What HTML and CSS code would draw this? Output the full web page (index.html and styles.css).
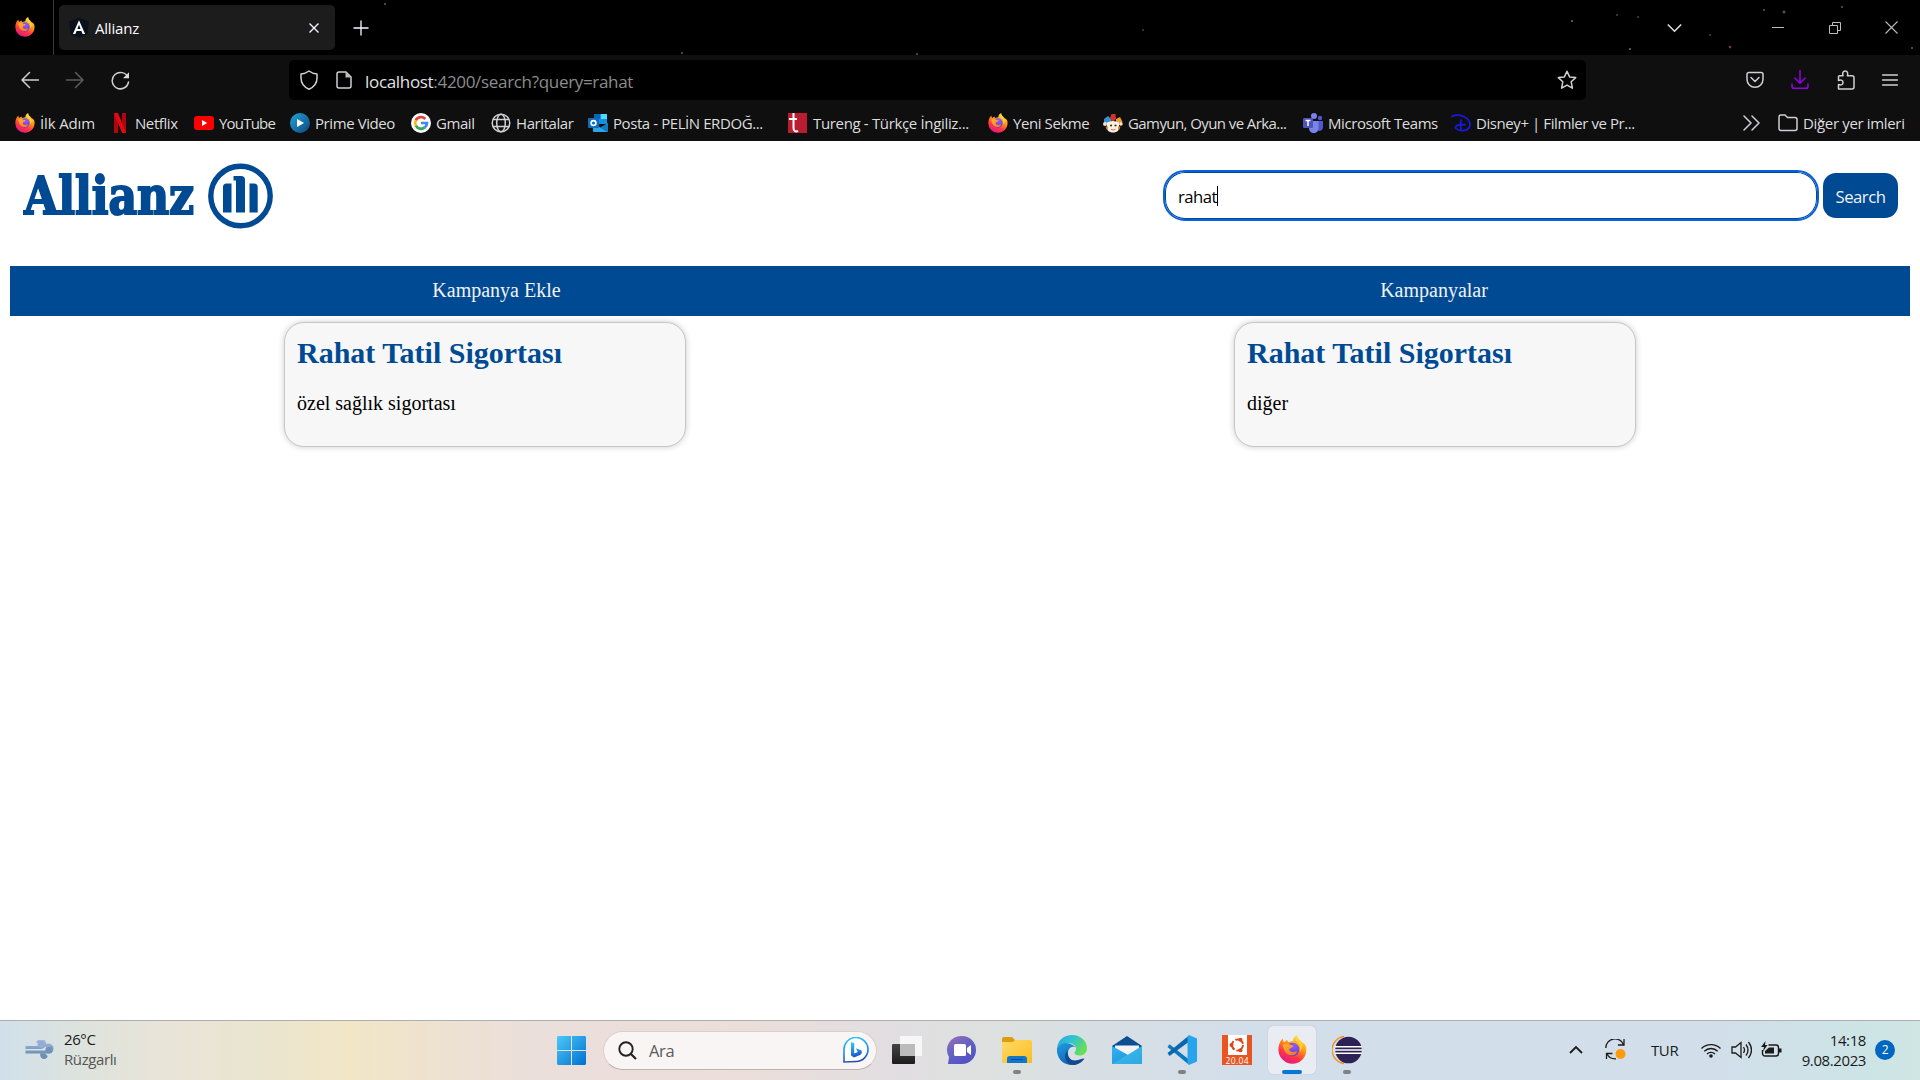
FILE: index.html
```html
<!DOCTYPE html>
<html lang="tr">
<head>
<meta charset="utf-8">
<title>Allianz</title>
<link rel="stylesheet" href="styles.css">
</head>
<body>
<svg class="defs" aria-hidden="true">
  <defs>
    <linearGradient id="ffFlame" x1=".8" y1="0" x2=".3" y2="1"><stop offset="0" stop-color="#fff44f"/><stop offset=".4" stop-color="#ff980e"/><stop offset=".7" stop-color="#ff3647"/><stop offset="1" stop-color="#e31587"/></linearGradient>
    <radialGradient id="ffGlobe" cx=".6" cy=".2" r=".9"><stop offset="0" stop-color="#9059ff"/><stop offset="1" stop-color="#5b3fc4"/></radialGradient>
    <linearGradient id="ffInner" x1="0" y1="0" x2="1" y2="1"><stop offset="0" stop-color="#ffb82e"/><stop offset="1" stop-color="#ff6a2a"/></linearGradient>
    <linearGradient id="winBlue" x1="0" y1="0" x2="1" y2="1"><stop offset="0" stop-color="#4cc8f8"/><stop offset="1" stop-color="#0070d0"/></linearGradient>
    <linearGradient id="bing" x1=".3" y1="0" x2=".5" y2="1"><stop offset="0" stop-color="#2bc9f0"/><stop offset=".6" stop-color="#1f86e8"/><stop offset="1" stop-color="#2247b8"/></linearGradient>
    <linearGradient id="chat" x1="0" y1="0" x2=".6" y2="1"><stop offset="0" stop-color="#a06fb4"/><stop offset=".5" stop-color="#6463c4"/><stop offset="1" stop-color="#5152c6"/></linearGradient>
    <linearGradient id="folder" x1="0" y1="0" x2="1" y2="1"><stop offset="0" stop-color="#ffdb6b"/><stop offset="1" stop-color="#fcbc1f"/></linearGradient>
    <linearGradient id="edgeTop" x1="0" y1="0" x2="1" y2=".5"><stop offset="0" stop-color="#2aa5dc"/><stop offset=".5" stop-color="#32c3d2"/><stop offset="1" stop-color="#67df55"/></linearGradient>
    <linearGradient id="edgeLeft" x1="0" y1="0" x2=".6" y2="1"><stop offset="0" stop-color="#1f9de0"/><stop offset="1" stop-color="#1360b4"/></linearGradient>
    <linearGradient id="mail" x1="0" y1="0" x2="1" y2="1"><stop offset="0" stop-color="#35b6f0"/><stop offset="1" stop-color="#1687d8"/></linearGradient>
    <linearGradient id="wind" x1="0" y1="0" x2="0" y2="1"><stop offset="0" stop-color="#a6b9dc"/><stop offset="1" stop-color="#5f87ad"/></linearGradient>
    <linearGradient id="prime" x1="0" y1="0" x2="1" y2="1"><stop offset="0" stop-color="#1da6da"/><stop offset="1" stop-color="#12457c"/></linearGradient>
    <linearGradient id="dark" x1="0" y1="0" x2="0" y2="1"><stop offset="0" stop-color="#444"/><stop offset="1" stop-color="#1c1c1c"/></linearGradient>
    <symbol id="firefox" viewBox="0 0 20 20">
      <path d="M19.4 8.2c-.4-1.3-1.3-2.4-2.3-3 .2.5.3.9.3 1.2C16.300 3.800 13.300 3 13.200 0c-2 1-2.900 2.600-2.800 4.200-1 0-2 .3-2.900.8-.5-.4-1-.9-1.200-1.600-.9.400-1.500 1-1.900 1.600C3.600 4.700 3.300 3.600 3.400 2.400 1.700 3.500.4 6.600.3 9.900A9.700 9.700 0 0 0 10 19.800c5.800 0 10.500-5 9.400-11.600z" fill="url(#ffFlame)"/>
      <circle cx="10" cy="10" r="4.700" fill="url(#ffGlobe)"/>
      <path d="M3.200 6.800c1.800-1 3.600-1 5.200-.1 1 .2 2 .4 2.200 1-.2.800-1.700 1.100-2.600 1.700-.4.900.1 2 1.600 2.400 1.400.4 2.400-.7 3.600-.3-.8 2.200-3.200 3-5.400 2.300C4.600 12.700 3.900 9.600 3.200 6.800z" fill="url(#ffInner)"/>
      <path d="M12 3.700c2.800 1.600 3.900 4.300 3 7.300 1.400-.5 2-2.500 1.700-4.600C15 4.400 13.500 3.500 13.300 1.500c-.8.6-1.300 1.400-1.300 2.200z" fill="#ffd940" opacity=".75"/>
    </symbol>
  </defs>
</svg>

<header class="chrome">
  <div class="tabstrip">
    <div class="pinned"><svg class="i20"><use href="#firefox"/></svg></div>
    <div class="tab">
      <svg class="i20" viewBox="0 0 20 20"><path d="M10 0l10 3.500-1.500 12.300L10 20l-8.500-4.200L0 3.500z" fill="#0a101c"/><path d="M10 2.300L3.900 16h2.500l1.200-3h4.800l1.200 3h2.500zm0 4.400l1.600 4.200H8.400z" fill="#fff"/></svg>
      <span class="tab-title">Allianz</span>
      <svg class="tab-close" viewBox="0 0 10 10"><path d="M.5.5l9 9M9.500.5l-9 9" stroke="#fbfbfe" stroke-width="1.300"/></svg>
    </div>
    <svg class="new-tab" viewBox="0 0 16 16"><path d="M8 .5v15M.5 8h15" stroke="#fbfbfe" stroke-width="1.300"/></svg>
    <div class="window-controls">
      <svg width="15" height="10" viewBox="0 0 15 10"><path d="M.8 1.500l6.700 6.700 6.700-6.700" fill="none" stroke="#ddd" stroke-width="1.600"/></svg>
      <svg width="12" height="12" viewBox="0 0 12 12"><path d="M0 5.500h12" stroke="#bbb"/></svg>
      <svg width="12" height="12" viewBox="0 0 12 12"><path d="M.5 3.500h8v8h-8zM3.500 3.500v-3h8v8h-3" fill="none" stroke="#bbb"/></svg>
      <svg width="13" height="13" viewBox="0 0 13 13"><path d="M.5.5l12 12M12.500.5l-12 12" stroke="#bbb" stroke-width="1.100"/></svg>
    </div>
  </div>

  <div class="toolbar">
    <div class="nav-buttons">
      <svg width="18" height="18" viewBox="0 0 18 18" class="line"><path d="M17.500 9H1M8.500 1.500L1 9l7.500 7.500"/></svg>
      <svg width="18" height="18" viewBox="0 0 18 18" class="line faded"><path d="M.5 9H17M9.500 1.500L17 9l-7.500 7.500"/></svg>
      <svg width="19" height="19" viewBox="0 0 19 19" class="line"><path d="M17 6.500A8.200 8.200 0 1 0 17.500 11"/><path d="M18 1.200v6h-6z" fill="#ddd" stroke="none"/></svg>
    </div>
    <div class="urlbar">
      <svg width="18" height="20" viewBox="0 0 18 20" class="line"><path d="M9 1c2.500 2 5 2.800 8 3v4c0 5.500-3 9-8 11.200C4 17 1 13.500 1 8V4c3-.2 5.500-1 8-3z"/></svg>
      <svg class="page-icon line" width="16" height="18" viewBox="0 0 16 18"><path d="M3 1h7l5 5v9a2 2 0 0 1-2 2H3a2 2 0 0 1-2-2V3a2 2 0 0 1 2-2z"/><path d="M9.500 1v5.500H15z" fill="#bbb" stroke="none"/></svg>
      <span class="url"><b>localhost</b>:4200/search?query=rahat</span>
      <svg class="star line" width="20" height="20" viewBox="0 0 20 20"><path d="M10 1.300l2.600 5.600 6.100.7-4.500 4.200 1.200 6.400-5.400-3.100-5.400 3.100 1.200-6.400L1.300 7.600l6.100-.7z"/></svg>
    </div>
    <div class="actions">
      <svg width="18" height="18" viewBox="0 0 18 18" class="line"><path d="M2.800 1.500h12.400A1.800 1.800 0 0 1 17 3.300v5a8 8 0 0 1-16 0v-5a1.800 1.800 0 0 1 1.800-1.800zM5 6.500l4 4 4-4"/></svg>
      <svg width="18" height="20" viewBox="0 0 18 20" class="line download"><path d="M9 0v13M3.800 8L9 13.200 14.200 8M1 14v2.500A1.800 1.800 0 0 0 2.800 18.300h12.400a1.800 1.800 0 0 0 1.800-1.800V14"/></svg>
      <svg width="18" height="20" viewBox="0 0 18 20" class="line"><path d="M1.500 19V14.500c3 1 4.500 0 4.500-2s-1.500-3-4.500-2V6.700a1 1 0 0 1 1-1H6c-.8-2.600 0-4.700 2.200-4.700s3 2.100 2.200 4.700H15a2 2 0 0 1 2 2V17a2 2 0 0 1-2 2z"/></svg>
      <svg width="16" height="14" viewBox="0 0 16 14" class="line"><path d="M.5 2h15M.5 7h15M.5 12h15"/></svg>
    </div>
  </div>

  <div class="bookmarks">
    <div class="bookmark first"><svg class="i20"><use href="#firefox"/></svg><span>İlk Adım</span></div>
    <div class="bookmark"><svg class="i20" viewBox="0 0 20 20"><path d="M4 0h4v20H4zM12 0h4v20h-4z" fill="#b1060f"/><path d="M4 0h4l8 20h-4z" fill="#e50914"/></svg><span>Netflix</span></div>
    <div class="bookmark youtube"><svg class="i20" viewBox="0 0 20 20"><rect y="3" width="20" height="14" rx="3" fill="#f00"/><path d="M8 7l5.200 3L8 13z" fill="#fff"/></svg><span>YouTube</span></div>
    <div class="bookmark"><svg class="i20" viewBox="0 0 20 20"><circle cx="10" cy="10" r="10" fill="url(#prime)"/><path d="M7 6l7 4-7 4z" fill="#fff"/></svg><span>Prime Video</span></div>
    <div class="bookmark"><svg class="i20" viewBox="0 0 20 20"><circle cx="10" cy="10" r="10" fill="#fff"/><g fill="none" stroke-width="2.700"><path d="M14.300 6A5.900 5.900 0 0 0 4.800 7.300" stroke="#ea4335"/><path d="M4.800 7.300a5.900 5.900 0 0 0 0 5.400" stroke="#fbbc05"/><path d="M4.800 12.700a5.900 5.900 0 0 0 9 1.700" stroke="#34a853"/><path d="M13.800 14.400A5.900 5.900 0 0 0 16 10h-6" stroke="#4285f4"/></g></svg><span>Gmail</span></div>
    <div class="bookmark"><svg class="i20 line" viewBox="0 0 20 20"><circle cx="10" cy="10" r="8.800"/><ellipse cx="10" cy="10" rx="4.300" ry="8.800"/><path d="M2.500 6.500h15M2.500 13.500h15"/></svg><span>Haritalar</span></div>
    <div class="bookmark"><svg class="i20" viewBox="0 0 20 20"><path d="M6 1h13v10H6z" fill="#1490df"/><path d="M12.500 1H19v5h-6.500z" fill="#50d9ff"/><path d="M6 1h6.500v5H6z" fill="#0364b8"/><path d="M5 10l8 5 7-5v8a1 1 0 0 1-1 1H6a1 1 0 0 1-1-1z" fill="#28a8ea"/><path d="M20 10v8a1 1 0 0 1-1 1l-7-4.500z" fill="#1279c5"/><rect y="5" width="11" height="10" rx="1" fill="#0f6cbd"/><circle cx="5.500" cy="10" r="2.400" fill="none" stroke="#fff" stroke-width="1.600"/></svg><span>Posta - PELİN ERDOĞ...</span></div>
    <div class="bookmark tureng"><svg class="i20" viewBox="0 0 20 20"><rect width="19" height="20" fill="#ba1c30"/><path d="M5.500 0v15c0 3 2 4 4.500 3M1 6h8" fill="none" stroke="#fff" stroke-width="2"/></svg><span>Tureng - Türkçe İngiliz...</span></div>
    <div class="bookmark"><svg class="i20"><use href="#firefox"/></svg><span>Yeni Sekme</span></div>
    <div class="bookmark gamyun"><svg class="i20" viewBox="0 0 20 20"><path d="M1 10.500V6l4-3 4 4-2 3.500z" fill="#3c8fd0"/><path d="M8.500 1h4l.5 5-3 3-3-4z" fill="#d6302f"/><path d="M13 6l4-2 2.500 5-1.500 3h-5z" fill="#e8a13b"/><circle cx="2" cy="11" r="2" fill="#f2e6d2"/><circle cx="18" cy="11" r="1.700" fill="#f2e6d2"/><path d="M4 9.500q6-3 12 0V15c0 3-3 4.500-6 4.500S4 18 4 15z" fill="#fff2df"/><path d="M2.500 13.500h2.500v3H3.500zM15 13.500h2.500l-1 3H15z" fill="#d58a49"/><circle cx="8" cy="12.500" r="1.100" fill="#432"/><circle cx="12.500" cy="12.500" r="1.100" fill="#432"/><path d="M8 16.300q2.300 1.500 4.500 0" stroke="#c66" fill="none"/></svg><span>Gamyun, Oyun ve Arka...</span></div>
    <div class="bookmark"><svg class="i20" viewBox="0 0 20 20"><circle cx="17" cy="5" r="2.200" fill="#5059c9"/><circle cx="11" cy="3" r="3" fill="#7b83eb"/><path d="M14 8h6v6c0 2.500-2 4-4 4s-2-3-2-3z" fill="#5059c9"/><path d="M6 8h9.500v7c0 3-2 5-4.700 5S6 18 6 15z" fill="#7b83eb"/><rect y="5" width="10" height="10" rx="1" fill="#4b53bc"/><path d="M2.500 7.500h5M5 7.500v5.500" stroke="#fff" stroke-width="1.500"/></svg><span>Microsoft Teams</span></div>
    <div class="bookmark"><svg class="i20" viewBox="0 0 20 20"><path d="M1 3.500C8 0 19 4.500 19 11.500S8.500 19 5 15.500c-2-2.500 3-4.500 9-3.800M10 7c-.6 3-.6 6 0 9.500" fill="none" stroke="#1919e6" stroke-width="1.700" stroke-linecap="round"/></svg><span>Disney+ | Filmler ve Pr...</span></div>
    <svg class="overflow line" width="17" height="16" viewBox="0 0 17 16"><path d="M1 1l7 7-7 7M9 1l7 7-7 7"/></svg>
    <div class="bookmark others"><svg width="20" height="20" viewBox="0 0 20 20" class="line"><path d="M1 15.500V4a2 2 0 0 1 2-2h4l2.500 2.500H17a2 2 0 0 1 2 2v9a2 2 0 0 1-2 2H3a2 2 0 0 1-2-2z"/></svg><span>Diğer yer imleri</span></div>
  </div>
</header>

<main class="page">
  <div class="site-header">
    <svg class="logo" width="252" height="66" viewBox="0 0 252 66" role="img">
      <text class="logo-text" x="1" y="50.500" textLength="170" lengthAdjust="spacingAndGlyphs">Allianz</text>
      <circle cx="217.500" cy="33" r="29.700" fill="none" stroke="#004a93" stroke-width="5.400"/>
      <path d="M200 49.500V24q0-3.500 3.500-3.500h5v29zM213 49.500V17.500h-2.500V13H218q4 0 4 4v32.500zM226.500 49.500v-29h4.500q3.700 0 3.700 3.500v25.500z" fill="#004a93"/>
    </svg>
    <form class="search">
      <div class="search-input"><span>rahat</span><i class="caret"></i></div>
      <button type="button" class="search-button">Search</button>
    </form>
  </div>
  <nav class="menu"><a>Kampanya Ekle</a><a>Kampanyalar</a></nav>
  <section class="results">
    <article class="card"><h2>Rahat Tatil Sigortası</h2><p>özel sağlık sigortası</p></article>
    <article class="card"><h2>Rahat Tatil Sigortası</h2><p>diğer</p></article>
  </section>
</main>

<footer class="taskbar">
  <div class="weather">
    <svg width="30" height="20" viewBox="0 0 30 20"><path d="M1.500 7.500H17a3.700 3.700 0 1 0-3.500-4.500M1.500 12H24a3.500 3.500 0 1 0-2.500-5.200M18 13.500a2.500 2.500 0 1 0 4.500 2" fill="none" stroke="url(#wind)" stroke-width="2.800"/><circle cx="17" cy="4.200" r="3.400" fill="#92add6"/><circle cx="25" cy="10" r="3.600" fill="#7193b9"/><circle cx="20" cy="16" r="2.700" fill="#6b90b5"/></svg>
    <div><div>26°C</div><div class="condition">Rüzgarlı</div></div>
  </div>
  <div class="apps">
    <svg class="start" width="29" height="29" viewBox="0 0 29 29"><path d="M1 0h13v14H0V1zM15 0h13l1 1v13H15zM0 15h14v14H1l-1-1zM15 15h14v13l-1 1H15z" fill="url(#winBlue)"/></svg>
    <div class="taskbar-search">
      <svg width="19" height="19" viewBox="0 0 19 19"><circle cx="8" cy="8" r="6.700" fill="none" stroke="#222" stroke-width="1.900"/><path d="M12.700 12.700l5.300 5.300" stroke="#222" stroke-width="2.200"/></svg>
      <span>Ara</span>
      <svg class="bing" width="26" height="26" viewBox="0 0 26 26"><path d="M1 25V13A12 12 0 1 1 13 24.500z" fill="#fff" stroke="url(#bing)" stroke-width="1.600"/><path d="M8 5l3.200 1.300v10.200l3.500-1.500-1.700-3.800 5.500 2.300q1 3-1.500 4.500L11 20.500 8 18.500z" fill="url(#bing)"/></svg>
    </div>
    <div class="app"><svg width="30" height="30" viewBox="0 0 30 30"><rect x="0" y="9" width="23" height="20" rx="1" fill="url(#dark)"/><rect x="8" y="1" width="22" height="20" rx="1" fill="#f7f7f7"/><path d="M8 9h15v12H8z" fill="#bbb"/></svg></div>
    <div class="app"><svg width="30" height="30" viewBox="0 0 30 30"><path d="M15 1a14 14 0 1 1 0 28H1l1-7A14 14 0 0 1 15 1z" fill="url(#chat)"/><rect x="7" y="9" width="12" height="12" rx="1.500" fill="#fff"/><path d="M20 13l4-3v10l-4-3z" fill="#fff"/></svg></div>
    <div class="app running"><svg width="30" height="30" viewBox="0 0 30 30"><path d="M0 12V4q0-2 2-2h8l3 3v7z" fill="#dd9d0a"/><path d="M0 7h11l2-2h15q2 0 2 2v21H0z" fill="url(#folder)"/><path d="M5 28v-4q0-3 3-3h14q3 0 3 3v4z" fill="#1476c8"/><path d="M9 24.500h12" stroke="#0a4e91"/></svg></div>
    <div class="app"><svg width="30" height="30" viewBox="0 0 30 30"><path d="M0 13C1 5 7 0 15 0c9 0 15 6.500 15 13 0 5-3.500 7.500-7.500 7.500-3 0-5-1.200-5-2.500 0-1 1.500-1.500 1.500-4 0-3-3-6-8-6C6 8 1.500 10 0 13z" fill="url(#edgeTop)"/><path d="M0 13c2-4 6-5.500 10-5 4 .5 7 2.500 8 4-4-1-7 2-7 6 0 6 5 10 12 9-2.500 2-5 3-8 3C6 30-1 23 0 13z" fill="url(#edgeLeft)"/><path d="M11 15c-2 7 3 12 10 10 3-.7 5-2 6.500-1.500C24 29 18 31 13 29.500 8 27 6 20 11 15z" fill="#114a91"/></svg></div>
    <div class="app"><svg width="30" height="30" viewBox="0 0 30 30"><path d="M0 11L15 1l15 10v5H0z" fill="#0b4f92"/><path d="M3 10.500h24V20H3z" fill="#f3f3f3"/><path d="M0 11l16 9 14-9v18H0z" fill="url(#mail)"/><path d="M0 29l30-18v18z" fill="#40c0ea" opacity=".6"/></svg></div>
    <div class="app running"><svg width="30" height="30" viewBox="0 0 30 30"><path d="M2.500 9.200L22 24.500v5.300L.5 12z" fill="#0a79c2"/><path d="M.5 18L22 .5v6.300L2.500 21z" fill="#0b67ab"/><path d="M22 0l8 3.500v23L22 30l-1.500-2V2z" fill="#27a4ec"/></svg></div>
    <div class="app"><svg width="30" height="30" viewBox="0 0 30 30"><path d="M0 0h30v30H0z" fill="#e95420"/><path d="M6 0h19v20H6z" fill="#fff"/><circle cx="15.500" cy="10" r="5.500" fill="none" stroke="#d9481c" stroke-width="2" stroke-dasharray="9.500 2"/><circle cx="9.500" cy="10" r="2" fill="#d9481c"/><circle cx="18.500" cy="4.800" r="2" fill="#d9481c"/><circle cx="18.500" cy="15.200" r="2" fill="#d9481c"/><text x="3.500" y="29" class="ubuntu" textLength="23">20.04</text></svg></div>
    <div class="app active"><svg width="29" height="29"><use href="#firefox"/></svg></div>
    <div class="app running"><svg width="30" height="30" viewBox="0 0 30 30"><path d="M12 1.500A13.600 13.600 0 0 0 12 28.500 13.600 13.600 0 0 1 12 1.500z" fill="#f7941e" stroke="#f7941e" stroke-width="1.500"/><circle cx="16.500" cy="15" r="13.300" fill="#2c2255"/><path d="M3 11.700h27M3 15h27M3 18.300h27" stroke="#fff" stroke-width="1.500"/></svg></div>
  </div>
  <div class="tray">
    <svg class="up" width="14" height="9" viewBox="0 0 14 9"><path d="M1 8l6-6 6 6" fill="none" stroke="#1b1b1b" stroke-width="1.800"/></svg>
    <svg class="sync" width="21" height="21" viewBox="0 0 21 21"><path d="M.8 9A9.200 9.200 0 0 1 18.500 5.500M19 0v6h-6M11 19.800A9.500 9.500 0 0 1 2 15M1.500 20v-5.500h6" fill="none" stroke="#1b1b1b" stroke-width="1.300"/><circle cx="15.500" cy="15" r="5" fill="#ff9a0a"/></svg>
    <span class="lang">TUR</span>
    <svg class="wifi" width="20" height="16" viewBox="0 0 20 16"><g fill="none" stroke="#1b1b1b" stroke-width="1.400"><path d="M.5 6.500a13.500 13.500 0 0 1 19 0M3.300 9.300a9.500 9.500 0 0 1 13.400 0M6 12a5.700 5.700 0 0 1 8 0"/></g><circle cx="10" cy="14" r="1.800" fill="#1b1b1b"/></svg>
    <svg class="sound" width="21" height="18" viewBox="0 0 21 18"><path d="M1 6h3.500L10 1.500v15L4.500 12H1zM12.500 6q2 3 0 6M15 3.500q4 5.500 0 11M17.500 1q6 8 0 16" fill="none" stroke="#1b1b1b" stroke-width="1.300"/></svg>
    <svg class="battery" width="21" height="17" viewBox="0 0 21 17"><path d="M7.500 4H15a2.500 2.500 0 0 1 2.500 2.500v6A2.500 2.500 0 0 1 15 15H4a2.500 2.500 0 0 1-2.500-2.500V9" fill="none" stroke="#1b1b1b" stroke-width="1.400"/><path d="M18 7.500h2.500v4H18zM8 6.500h5v6H4V10zM4.500 0L0 6h3l-1 4.500L6.500 4H4z" fill="#1b1b1b"/></svg>
    <div class="clock"><div>14:18</div><div>9.08.2023</div></div>
    <span class="count">2</span>
  </div>
</footer>
</body>
</html>
```
FILE: styles.css
```css
* { box-sizing: border-box; }
body {
  margin: 0;
  width: 1920px;
  height: 1080px;
  overflow: hidden;
  display: flex;
  flex-direction: column;
  background: #fff;
  font-family: "Open Sans", "Noto Sans", sans-serif;
}
svg { display: block; flex: none; }
.defs { position: absolute; width: 0; height: 0; }
.i20 { width: 20px; height: 20px; }
.line { fill: none; stroke: #d0d0d2; stroke-width: 1.5; stroke-linejoin: round; stroke-linecap: round; }
.faded { opacity: .4; }
.download { stroke: #9400e8; }

/* Browser window */
.chrome { flex: none; height: 141px; background: #0f0f10; color: #ddd; }
/* Night-sky theme: a few faint stars */
.tabstrip {
  height: 55px;
  display: flex;
  align-items: center;
  background-color: #000;
  background-image:
    radial-gradient(circle at 385px 4px, #444 0 .8px, transparent 1.4px),
    radial-gradient(circle at 682px 53px, #444 0 .8px, transparent 1.4px),
    radial-gradient(circle at 917px 54px, #444 0 .8px, transparent 1.4px),
    radial-gradient(circle at 1143px 30px, #333 0 .8px, transparent 1.4px),
    radial-gradient(circle at 1572px 21px, #555 0 .8px, transparent 1.4px),
    radial-gradient(circle at 1617px 15px, #333 0 .8px, transparent 1.4px),
    radial-gradient(circle at 1630px 49px, #555 0 .8px, transparent 1.4px),
    radial-gradient(circle at 1638px 17px, #333 0 .8px, transparent 1.4px),
    radial-gradient(circle at 1710px 35px, #333 0 .8px, transparent 1.4px),
    radial-gradient(circle at 1730px 47px, #6b4038 0 1px, transparent 1.7px),
    radial-gradient(circle at 1764px 10px, #444 0 .8px, transparent 1.4px),
    radial-gradient(circle at 1784px 12px, #555 0 1px, transparent 1.8px),
    radial-gradient(circle at 1842px 7px, #444 0 .8px, transparent 1.4px),
    radial-gradient(circle at 1912px 48px, #444 0 .8px, transparent 1.4px);
}
.pinned { width: 54px; height: 55px; padding: 17px 0 0 15px; border-right: 1px solid #3a3a3c; }
.tab {
  width: 276px;
  height: 45px;
  margin-left: 5px;
  padding: 0 16px 0 10px;
  display: flex;
  align-items: center;
  border-radius: 5px;
  background: #1c1c1c;
  color: #fbfbfe;
}
.tab-title { margin: 0 auto 0 6px; font-size: 15px; letter-spacing: -.2px; line-height: 20px; }
.tab-close { width: 10px; height: 10px; }
.new-tab { width: 16px; height: 16px; margin-left: 18px; }
.window-controls { margin-left: auto; padding-right: 22px; display: flex; align-items: center; }
.window-controls svg:nth-child(2) { margin-left: 90px; }
.window-controls svg:nth-child(3) { margin-left: 45px; }
.window-controls svg:nth-child(4) { margin-left: 44px; }

.toolbar { height: 50px; display: flex; align-items: center; }
.nav-buttons { width: 289px; padding-left: 21px; display: flex; align-items: center; gap: 27px; }
.urlbar {
  width: 1297px;
  height: 40px;
  padding: 0 9px 0 11px;
  display: flex;
  align-items: center;
  border-radius: 5px;
  background: #000;
}
.page-icon { margin-left: 18px; }
.url { margin: 3px auto 0 13px; font-size: 17px; letter-spacing: -.32px; line-height: 24px; color: #8c8c8c; }
.url b { font-weight: 400; color: #e2e2e2; }
.actions { flex: 1; padding: 0 22px 0 160px; display: flex; align-items: center; justify-content: space-between; }

.bookmarks {
  height: 36px;
  padding-left: 15px;
  display: grid;
  grid-template-columns: 95px 84px 96px 121px 80px 97px 200px 200px 115px 200px 148px 292px 35px 127px;
  align-items: center;
}
.bookmark { display: flex; align-items: center; gap: 5px; white-space: nowrap; font-size: 15px; letter-spacing: -.42px; line-height: 20px; }
.first { letter-spacing: -.15px; }
.youtube { letter-spacing: -.8px; }
.tureng { letter-spacing: -.34px; }
.gamyun { letter-spacing: -.58px; }
.others { letter-spacing: -.34px; }

/* Page */
.page { flex: 1; padding: 0 10px; }
.site-header { height: 125px; display: flex; justify-content: space-between; padding: 22px 12px 0 13px; }
.logo-text { font: bold 53px "DejaVu Serif Condensed", "DejaVu Serif", serif; fill: #004a93; stroke: #004a93; stroke-width: 2px; }
.search { display: flex; align-items: flex-start; gap: 4px; padding-top: 7px; }
.search-input {
  width: 656px;
  height: 51px;
  padding-left: 13px;
  display: flex;
  align-items: center;
  border: 2px solid #0860df;
  box-shadow: inset 0 0 0 1px #004a93;
  border-radius: 22px;
  background: #fff;
  font-size: 16.7px;
  letter-spacing: -.5px;
}
.search-input span { line-height: 24px; margin-top: 3px; }
.caret { width: 1px; height: 20px; margin-top: 1px; background: #000; }
.search-button {
  width: 75px;
  height: 45px;
  margin-top: 3px;
  padding: 2px 0 0;
  border: 0;
  border-radius: 13px;
  background: #004a93;
  color: #f2f2f2;
  font-family: inherit;
  font-size: 16.7px;
  letter-spacing: -.5px;
}
.menu {
  height: 50px;
  padding-bottom: 1px;
  display: grid;
  grid-template-columns: 973px 902px;
  align-items: center;
  text-align: center;
  background: #004a93;
  color: #f2f2f2;
  font-family: "Liberation Serif", serif;
  font-size: 20px;
}
.results { display: grid; grid-template-columns: 1fr 1fr; justify-items: center; padding-top: 6px; }
.card {
  width: 402px;
  height: 125px;
  padding: 12px 12px;
  border: 1px solid #c6c6c6;
  border-radius: 20px;
  background: #f7f7f7;
  box-shadow: 0 0 6px rgba(0, 0, 0, .2);
  font-family: "Liberation Serif", serif;
}
.card h2 { margin: 0; font-size: 30px; line-height: 36px; color: #004a93; }
.card p { margin: 20px 0 0; font-size: 20px; line-height: 24px; color: #000; }

/* Taskbar */
.taskbar {
  flex: none;
  height: 60px;
  display: flex;
  border-top: 1px solid #acadae;
  background: linear-gradient(90deg, #d0e0ea 0, #dfe3dc 90px, #e9e4d8 170px, #eae5cf 260px, #f2e6c7 350px, #eee2d0 430px, #ebdfdb 530px, #ecdeda 730px, #e1dee1 900px, #dee1df 980px, #d8dfe4 1090px, #d2deea 1250px, #d2deea 1700px, #cde4e6 1860px, #d0e6e5 1920px);
  color: #1b1b1b;
  font-size: 15px;
  letter-spacing: -.4px;
}
.weather { width: 557px; padding: 8px 0 0 24px; display: flex; gap: 10px; line-height: 20px; }
.weather svg { margin-top: 11px; }
.condition { color: #555; }
.apps { display: flex; align-items: center; padding-bottom: 1px; }
.taskbar-search {
  width: 274px;
  height: 39px;
  margin: 0 6px 0 17px;
  padding: 0 7px 0 14px;
  display: flex;
  align-items: center;
  border: 1px solid #d9cfcd;
  border-bottom-color: #bdb2b0;
  border-radius: 20px;
  background: #f9f5f4;
  color: #5c5c5c;
  font-size: 16.5px;
}
.taskbar-search span { margin: 0 auto 0 12px; }
.app {
  width: 48px;
  height: 48px;
  margin-right: 7px;
  display: flex;
  flex-direction: column;
  align-items: center;
  padding-top: 9px;
  border-radius: 5px;
}
.app::after { content: ""; flex: none; margin-top: 5px; height: 4px; border-radius: 2px; }
.running::after { width: 8px; background: #7f8184; }
.active { background: #e9edf3; box-shadow: 0 0 1px #aab; }
.active::after { width: 20px; margin-top: 6px; background: #0078d7; }
.ubuntu { font: 8.5px "Open Sans", sans-serif; fill: #fff; letter-spacing: 0; }
.tray { flex: 1; display: flex; align-items: center; justify-content: flex-end; padding: 0 25px 2px 0; }
.sync { margin-left: 22px; }
.lang { width: 27px; margin-left: 25px; }
.wifi { margin-left: 23px; }
.sound { margin-left: 10px; }
.battery { margin-left: 9px; }
.clock { width: 84px; text-align: right; line-height: 20px; }
.count {
  width: 20px;
  height: 20px;
  margin-left: 9px;
  border-radius: 50%;
  background: #0067c0;
  color: #fff;
  font-size: 12px;
  line-height: 20px;
  text-align: center;
}
```
